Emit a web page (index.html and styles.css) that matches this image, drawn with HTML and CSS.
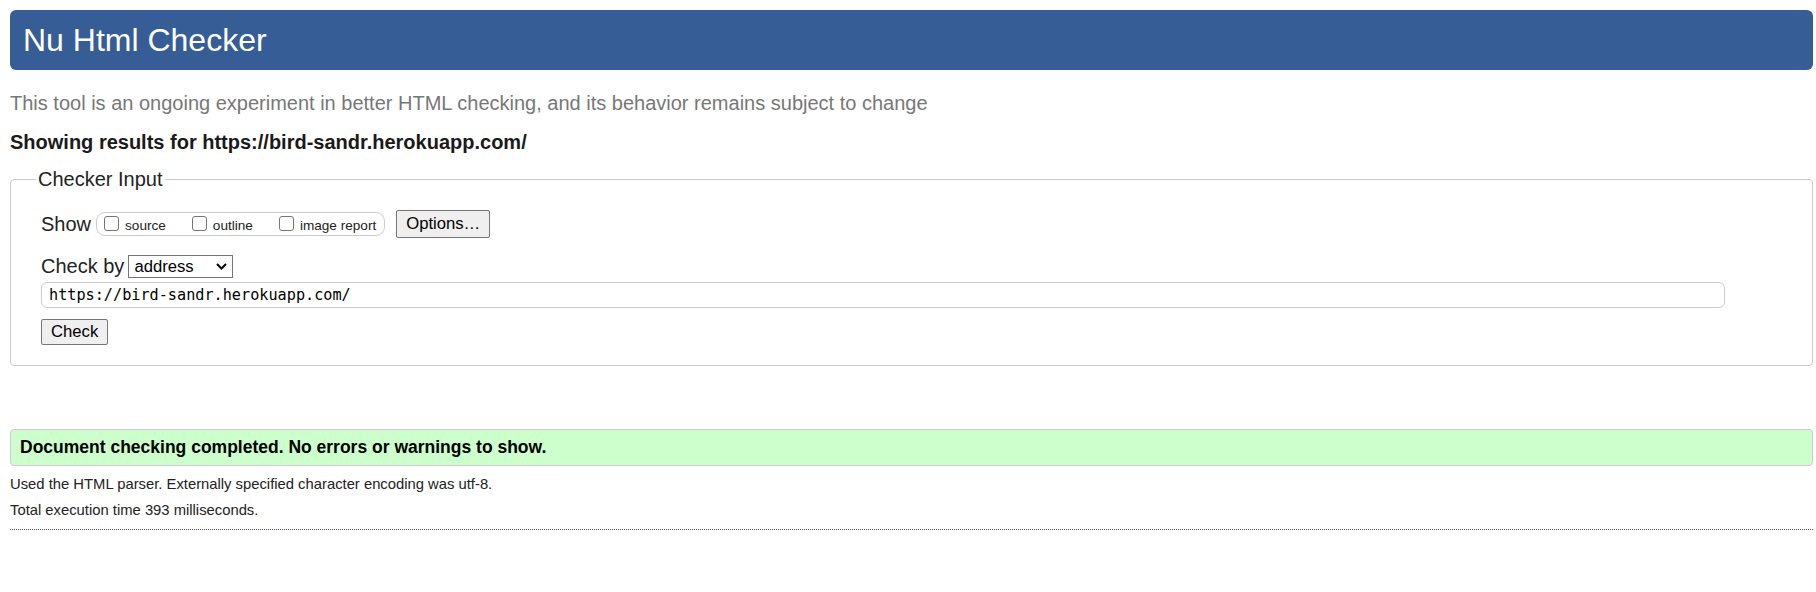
FILE: index.html
```html
<!DOCTYPE html>
<html lang="en">
<head>
<meta charset="utf-8">
<title>Nu Html Checker</title>
<link rel="stylesheet" href="styles.css">
</head>
<body>
<div class="page">
  <h1 class="masthead">Nu Html Checker</h1>
  <p class="tagline">This tool is an ongoing experiment in better HTML checking, and its behavior remains subject to change</p>
  <p class="showing">Showing results for https://bird-sandr.herokuapp.com/</p>
  <form class="checker-form">
    <fieldset class="input-box">
      <legend class="input-legend">Checker Input</legend>
      <div class="show-row">
        <span class="row-label">Show</span>
        <span class="opts">
          <label class="opt"><input class="cb" type="checkbox"><span>source</span></label>
          <label class="opt"><input class="cb" type="checkbox"><span>outline</span></label>
          <label class="opt"><input class="cb" type="checkbox"><span>image report</span></label>
        </span>
        <button class="btn options-btn" type="button">Options…</button>
      </div>
      <div class="by-row">
        <span class="row-label">Check by</span>
        <span class="select-wrap">
          <select class="by-select"><option>address</option></select>
          <svg class="chevron" width="11" height="7" viewBox="0 0 11 7" aria-hidden="true"><path d="M1 1 L5.5 5.5 L10 1" fill="none" stroke="#000" stroke-width="2"/></svg>
        </span>
      </div>
      <input class="url-input" type="url" value="https://bird-sandr.herokuapp.com/">
      <div class="submit-row">
        <button class="btn check-btn" type="button">Check</button>
      </div>
    </fieldset>
  </form>
  <div class="success">Document checking completed. No errors or warnings to show.</div>
  <p class="details first">Used the HTML parser. Externally specified character encoding was utf-8.</p>
  <p class="details">Total execution time 393 milliseconds.</p>
  <hr class="dotted">
</div>
</body>
</html>
```
FILE: styles.css
```css
html, body {
  margin: 0;
  padding: 0;
  background: #fff;
}

.page {
  padding: 10px 3px 0 10px;
  font-family: "Liberation Sans", Arial, sans-serif;
  color: #222;
}

.masthead {
  margin: 0;
  height: 60px;
  display: flex;
  align-items: center;
  padding-left: 13px;
  background: #365d95;
  color: #fff;
  border-radius: 6px;
  font-size: 32px;
  font-weight: normal;
  line-height: 1;
}

.tagline {
  margin: 21px 0 0;
  font-size: 20px;
  line-height: 24px;
  color: #777;
}

.showing {
  margin: 15px 0 0;
  font-size: 20px;
  line-height: 24px;
  font-weight: bold;
  color: #1a1a1a;
}

.checker-form {
  margin: 13px 0 0;
}

.input-box {
  margin: 0;
  border: 1px solid #ccc;
  border-radius: 4px;
  padding: 19px 0 20px 30px;
  min-width: 0;
}

.input-legend {
  margin-left: -5px;
  padding: 0 2px;
  font-size: 20px;
  line-height: 24px;
  color: #222;
}

.show-row {
  display: flex;
  align-items: center;
  height: 28px;
}

.row-label {
  font-size: 20px;
  line-height: 23px;
  color: #222;
}

.opts {
  display: flex;
  align-items: center;
  gap: 26px;
  height: 22px;
  margin-left: 5px;
  padding: 0 8px 0 7px;
  border: 1px solid #ccc;
  border-radius: 9px;
}

.opt {
  display: flex;
  align-items: baseline;
  gap: 6px;
  font-size: 13.6px;
  line-height: 16px;
  color: #222;
}

.cb {
  appearance: none;
  -webkit-appearance: none;
  margin: 0;
  width: 15px;
  height: 15px;
  border: 1px solid #767676;
  border-radius: 3px;
  background: #fff;
  position: relative;
  top: 1px;
}

.btn {
  font-family: "Liberation Sans", Arial, sans-serif;
  font-size: 16.67px;
  color: #000;
  background: #efefef;
  border: 1px solid #767676;
  border-radius: 2px;
  margin: 0;
}

.options-btn {
  margin-left: 11px;
  height: 28px;
  padding: 0 9px;
}

.by-row {
  display: flex;
  align-items: center;
  height: 23px;
  margin-top: 17px;
}

.select-wrap {
  position: relative;
  display: inline-flex;
  margin-left: 4px;
}

.by-select {
  appearance: none;
  -webkit-appearance: none;
  margin: 0;
  width: 105px;
  height: 23px;
  font-family: "Liberation Sans", Arial, sans-serif;
  font-size: 16.67px;
  color: #000;
  border: 1px solid #767676;
  border-radius: 0;
  background: #fff;
  padding: 0 2px 0 5px;
}

.chevron {
  position: absolute;
  right: 6px;
  top: 8px;
  pointer-events: none;
}

.url-input {
  display: block;
  box-sizing: border-box;
  margin: 4px 0 0;
  width: 1684px;
  height: 26px;
  padding: 0 7px;
  border: 1px solid #ccc;
  border-radius: 6px;
  font-family: "DejaVu Sans Mono", "Liberation Mono", monospace;
  font-size: 15.2px;
  color: #000;
  outline: none;
}

.submit-row {
  margin-top: 11px;
  display: flex;
}

.check-btn {
  height: 26px;
  padding: 0 9px;
}

.success {
  margin-top: 63px;
  height: 37px;
  box-sizing: border-box;
  display: flex;
  align-items: center;
  padding-left: 9px;
  background: #ccffcc;
  border: 1px solid #ccc;
  border-radius: 4px;
  font-size: 17.5px;
  font-weight: bold;
  color: #000;
}

.details {
  margin: 6px 0 0;
  font-size: 14.8px;
  line-height: 20px;
  color: #222;
}

.details.first {
  margin-top: 8px;
}

.dotted {
  margin: 9px 0 0;
  border: 0;
  border-top: 1px dotted #555;
  height: 0;
}
```
